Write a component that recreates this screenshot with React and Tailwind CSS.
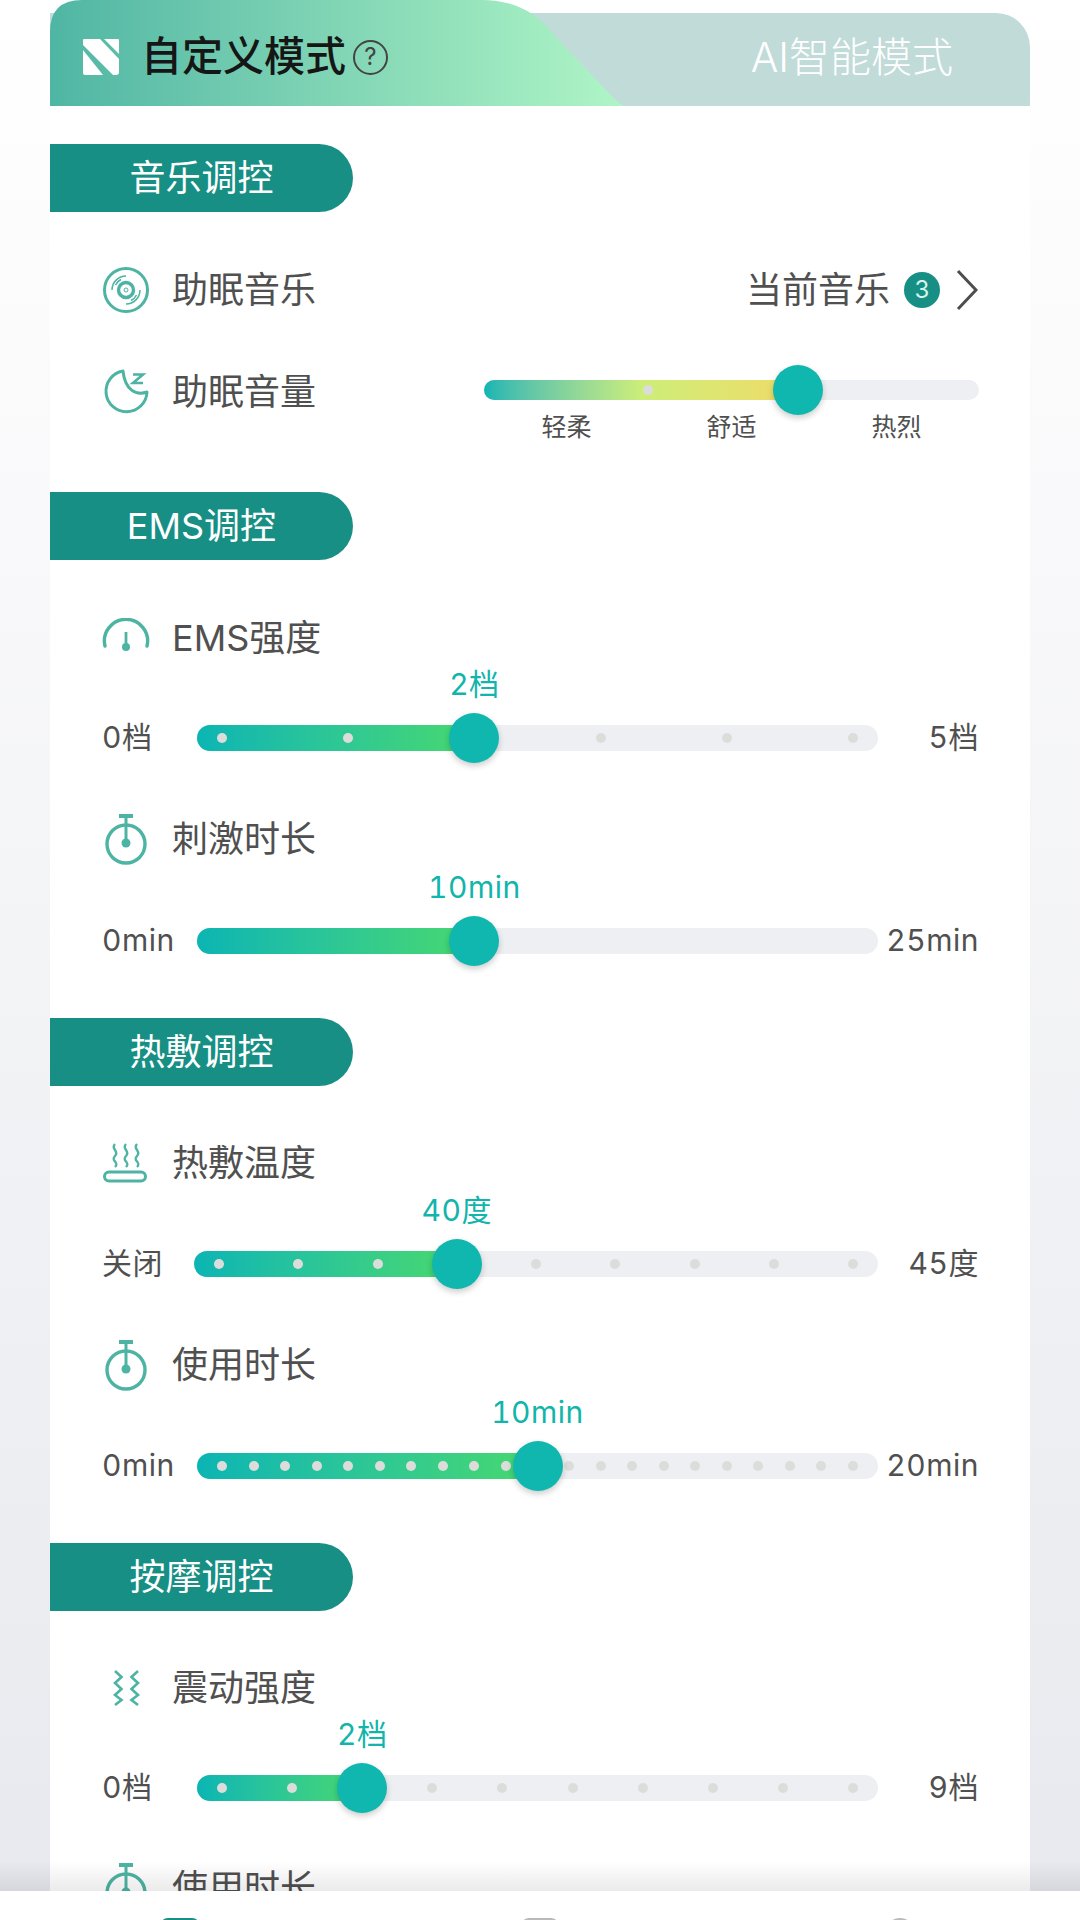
const FONT = { fontFamily: 'Inter, "Noto Sans CJK SC", sans-serif' }

function DiscIcon() {
  return (
    <svg width="48" height="48" viewBox="0 0 48 48" fill="none" stroke="#4db3a3">
      <circle cx="24" cy="24" r="21.5" strokeWidth="3" />
      <circle cx="24" cy="24" r="7.5" strokeWidth="3.4" />
      <circle cx="24" cy="24" r="2" strokeWidth="1" />
      <path d="M10 24A14 14 0 0 1 24 10M13.5 19A11.5 11.5 0 0 1 19 13.5M38 24A14 14 0 0 1 24 38M34.500 29A11.5 11.5 0 0 1 29 34.500" strokeWidth="1.5" />
    </svg>
  )
}

function MoonIcon() {
  return (
    <svg width="48" height="48" viewBox="0 0 48 48" fill="none" stroke="#4db3a3" strokeWidth="3">
      <path d="M21 3A20.500 20.500 0 1 0 45 24C34 28 23 22 21 3Z" strokeLinejoin="round" />
      <path d="M31 6.500H41L31 15H41" strokeWidth="2.600" />
    </svg>
  )
}

function GaugeIcon() {
  return (
    <svg width="48" height="40" viewBox="0 0 48 40" fill="none" stroke="#4db3a3">
      <path d="M3 28A21.600 21.600 0 1 1 45 28" strokeWidth="3.400" strokeLinecap="round" />
      <path d="M24 14V28" strokeWidth="2.800" />
      <circle cx="24" cy="29" r="4" fill="#4db3a3" stroke="none" />
    </svg>
  )
}

function TimerIcon() {
  return (
    <svg width="48" height="52" viewBox="0 0 48 52" fill="none" stroke="#4db3a3">
      <circle cx="24" cy="31" r="19" strokeWidth="3.400" />
      <path d="M17 3H31" strokeWidth="4" />
      <path d="M24 3V31" strokeWidth="3" />
      <circle cx="24" cy="30" r="4.500" fill="#4db3a3" stroke="none" />
    </svg>
  )
}

function SteamIcon() {
  return (
    <svg width="48" height="42" viewBox="0 0 48 42" fill="none" stroke="#4db3a3" strokeWidth="2.400">
      <rect x="2.500" y="30" width="41" height="9" rx="4.500" strokeWidth="3" />
      <path d="M13 2C8 7 18 9 13 14C8 19 18 20 13 25" />
      <path d="M24 2C19 7 29 9 24 14C19 19 29 20 24 25" />
      <path d="M35 2C30 7 40 9 35 14C30 19 40 20 35 25" />
    </svg>
  )
}

function WaveIcon() {
  return (
    <svg width="48" height="36" viewBox="0 0 48 36" fill="none" stroke="#4db3a3" strokeWidth="2.600">
      <path d="M13 1L19.500 7L13 13L19.500 19L13 25L19.500 30L13 35" />
      <path d="M36 1L29.500 7L36 13L29.500 19L36 25L29.500 30L36 35" />
    </svg>
  )
}

function Logo() {
  return (
    <svg width="36" height="36" viewBox="0 0 36 36" fill="#fff">
      <path d="M1 0H17L36 20V33Q36 36 33 36H30L0 6V1Q0 0 1 0Z" />
      <path d="M21 0H35Q36 0 36 1V15Z" />
      <path d="M0 11L20 36H2Q0 36 0 34Z" />
    </svg>
  )
}

function SectionPill({ children }) {
  return (
    <div className="w-[303px] h-[68px] flex items-center justify-center bg-[#178f85] rounded-r-[34px] text-white text-[36px]">
      {children}
    </div>
  )
}

function Title({ icon, children }) {
  return (
    <div className="flex items-center h-[50px] pl-[52px] text-[#505050]">
      <div className="w-[48px] flex justify-center shrink-0">{icon}</div>
      <span className="ml-[22px] text-[36px]">{children}</span>
    </div>
  )
}

function Slider({ left, right, label, value, max, dots = 0, leftW = 95 }) {
  const frac = value / max
  const pos = `calc(25px + (100% - 50px) * ${frac})`
  return (
    <div className="flex items-center h-[50px] pl-[52px] pr-[51px] text-[30px] text-[#505050] tabular-nums tracking-[0.5px]">
      <div className="shrink-0" style={{ width: leftW }}>{left}</div>
      <div className="relative flex-1 h-[26px] rounded-full bg-[#eeeff3]">
        <div className="absolute left-0 top-0 h-full rounded-l-full bg-gradient-to-r from-[#0ab5b3] to-[#47d86e]" style={{ width: pos }} />
        {dots > 0 && (
          <div className="absolute inset-0 flex items-center justify-between px-[20px]">
            {Array.from({ length: dots }).map((_, i) => (
              <span key={i} className="w-[10px] h-[10px] rounded-full bg-[#dcdddb]" />
            ))}
          </div>
        )}
        <div className="absolute top-1/2 w-[50px] h-[50px] -translate-x-1/2 -translate-y-1/2 rounded-full bg-[#10b7ae] shadow-[0_3px_6px_rgba(0,0,0,0.2)]" style={{ left: pos }} />
        <span className="absolute top-[-63px] -translate-x-1/2 whitespace-nowrap text-[#12b5ac]" style={{ left: pos }}>{label}</span>
      </div>
      <div className="w-[101px] shrink-0 text-right">{right}</div>
    </div>
  )
}

export default function App() {
  return (
    <div className="h-[1920px] flex flex-col overflow-hidden bg-gradient-to-b from-white to-[#e8e9ee]" style={FONT}>
      <main className="flex-1 min-h-0 overflow-hidden px-[50px]">
        <div className="bg-white">
          {/* Mode tabs */}
          <div className="relative h-[106px] pt-[13px]">
            <div className="h-full flex items-center justify-end pr-[77px] pb-[4px] bg-[#c1dbd9] rounded-tr-[34px] text-[41px] font-light text-white">
              AI智能模式
            </div>
            <div className="absolute left-0 top-0 w-[574px] h-[106px] flex items-center pl-[33px] pt-[8px] bg-gradient-to-r from-[#4fb6a4] to-[#aff5c6] [clip-path:path('M0_106V32Q0_0_32_0H432C462_0_487_12_503_34L556_90Q564_100_574_106Z')]">
              <Logo />
              <span className="ml-[22px] text-[41px] font-medium text-[#161616]">自定义模式</span>
              <span className="ml-[7px] w-[35px] h-[35px] flex items-center justify-center rounded-full border-2 border-[#444] text-[24px] text-[#444]">?</span>
            </div>
          </div>

          {/* 音乐调控 */}
          <div className="pt-[38px]">
            <SectionPill>音乐调控</SectionPill>
            <div className="mt-[51px] flex items-center justify-between pr-[52px]">
              <Title icon={<DiscIcon />}>助眠音乐</Title>
              <div className="flex items-center text-[36px] text-[#505050]">
                <span>当前音乐</span>
                <span className="ml-[14px] w-[36px] h-[36px] flex items-center justify-center rounded-full bg-[#178f85] text-[24px] text-[#d4f5ee]">3</span>
                <svg className="ml-[16px]" width="22" height="42" viewBox="0 0 22 42" fill="none" stroke="#4d4d4d" strokeWidth="3"><path d="M2 2L20 21L2 40" /></svg>
              </div>
            </div>
            <div className="mt-[50px] flex items-start justify-between pr-[51px]">
              <Title icon={<MoonIcon />}>助眠音量</Title>
              <div className="w-[495px] pt-[13px]">
                <div className="relative h-[20px] rounded-full bg-[#eeeff3]">
                  <div className="absolute left-0 top-0 h-full w-[64%] rounded-l-full bg-gradient-to-r from-[#0ab5b3] via-[#cdee78] to-[#f0da68]" />
                  <span className="absolute left-[164px] top-[5px] w-[10px] h-[10px] -translate-x-1/2 rounded-full bg-[#dcdddb]" />
                  <div className="absolute left-[314px] top-1/2 w-[50px] h-[50px] -translate-x-1/2 -translate-y-1/2 rounded-full bg-[#10b7ae] shadow-[0_3px_6px_rgba(0,0,0,0.2)]" />
                </div>
                <div className="mt-[9px] grid grid-cols-3 text-[25px] text-[#505050] text-center">
                  <span>轻柔</span>
                  <span>舒适</span>
                  <span>热烈</span>
                </div>
              </div>
            </div>
          </div>

          {/* EMS调控 */}
          <div className="pt-[45px]">
            <SectionPill>EMS调控</SectionPill>
            <div className="mt-[53px]">
              <Title icon={<GaugeIcon />}>EMS强度</Title>
              <div className="mt-[50px]"><Slider left="0档" right="5档" label="2档" value={2} max={5} dots={6} /></div>
              <div className="mt-[51px]"><Title icon={<TimerIcon />}>刺激时长</Title></div>
              <div className="mt-[52px]"><Slider left="0min" right="25min" label="10min" value={10} max={25} /></div>
            </div>
          </div>

          {/* 热敷调控 */}
          <div className="pt-[52px]">
            <SectionPill>热敷调控</SectionPill>
            <div className="mt-[52px]">
              <Title icon={<SteamIcon />}>热敷温度</Title>
              <div className="mt-[51px]"><Slider left="关闭" right="45度" label="40度" value={3} max={8} dots={9} leftW={92} /></div>
              <div className="mt-[51px]"><Title icon={<TimerIcon />}>使用时长</Title></div>
              <div className="mt-[51px]"><Slider left="0min" right="20min" label="10min" value={10} max={20} dots={21} /></div>
            </div>
          </div>

          {/* 按摩调控 */}
          <div className="pt-[52px]">
            <SectionPill>按摩调控</SectionPill>
            <div className="mt-[52px]">
              <Title icon={<WaveIcon />}>震动强度</Title>
              <div className="mt-[50px]"><Slider left="0档" right="9档" label="2档" value={2} max={9} dots={10} /></div>
              <div className="mt-[50px]"><Title icon={<TimerIcon />}>使用时长</Title></div>
            </div>
          </div>
        </div>
      </main>

      {/* Bottom tab bar, only its top edge is in frame */}
      <nav className="relative h-[29px] shrink-0 bg-white">
        <div className="absolute left-0 right-0 top-[-30px] h-[30px] bg-gradient-to-b from-transparent to-black/8" />
        <div className="absolute left-[160px] top-[27px] w-[40px] h-[10px] rounded-t-[8px] bg-[#178f85]" />
        <div className="absolute left-[521px] top-[27px] w-[38px] h-[10px] rounded-t-[8px] bg-[#b9b9b9]" />
        <div className="absolute left-[885px] top-[27px] w-[30px] h-[30px] rounded-full bg-[#b9b9b9]" />
      </nav>
    </div>
  )
}
